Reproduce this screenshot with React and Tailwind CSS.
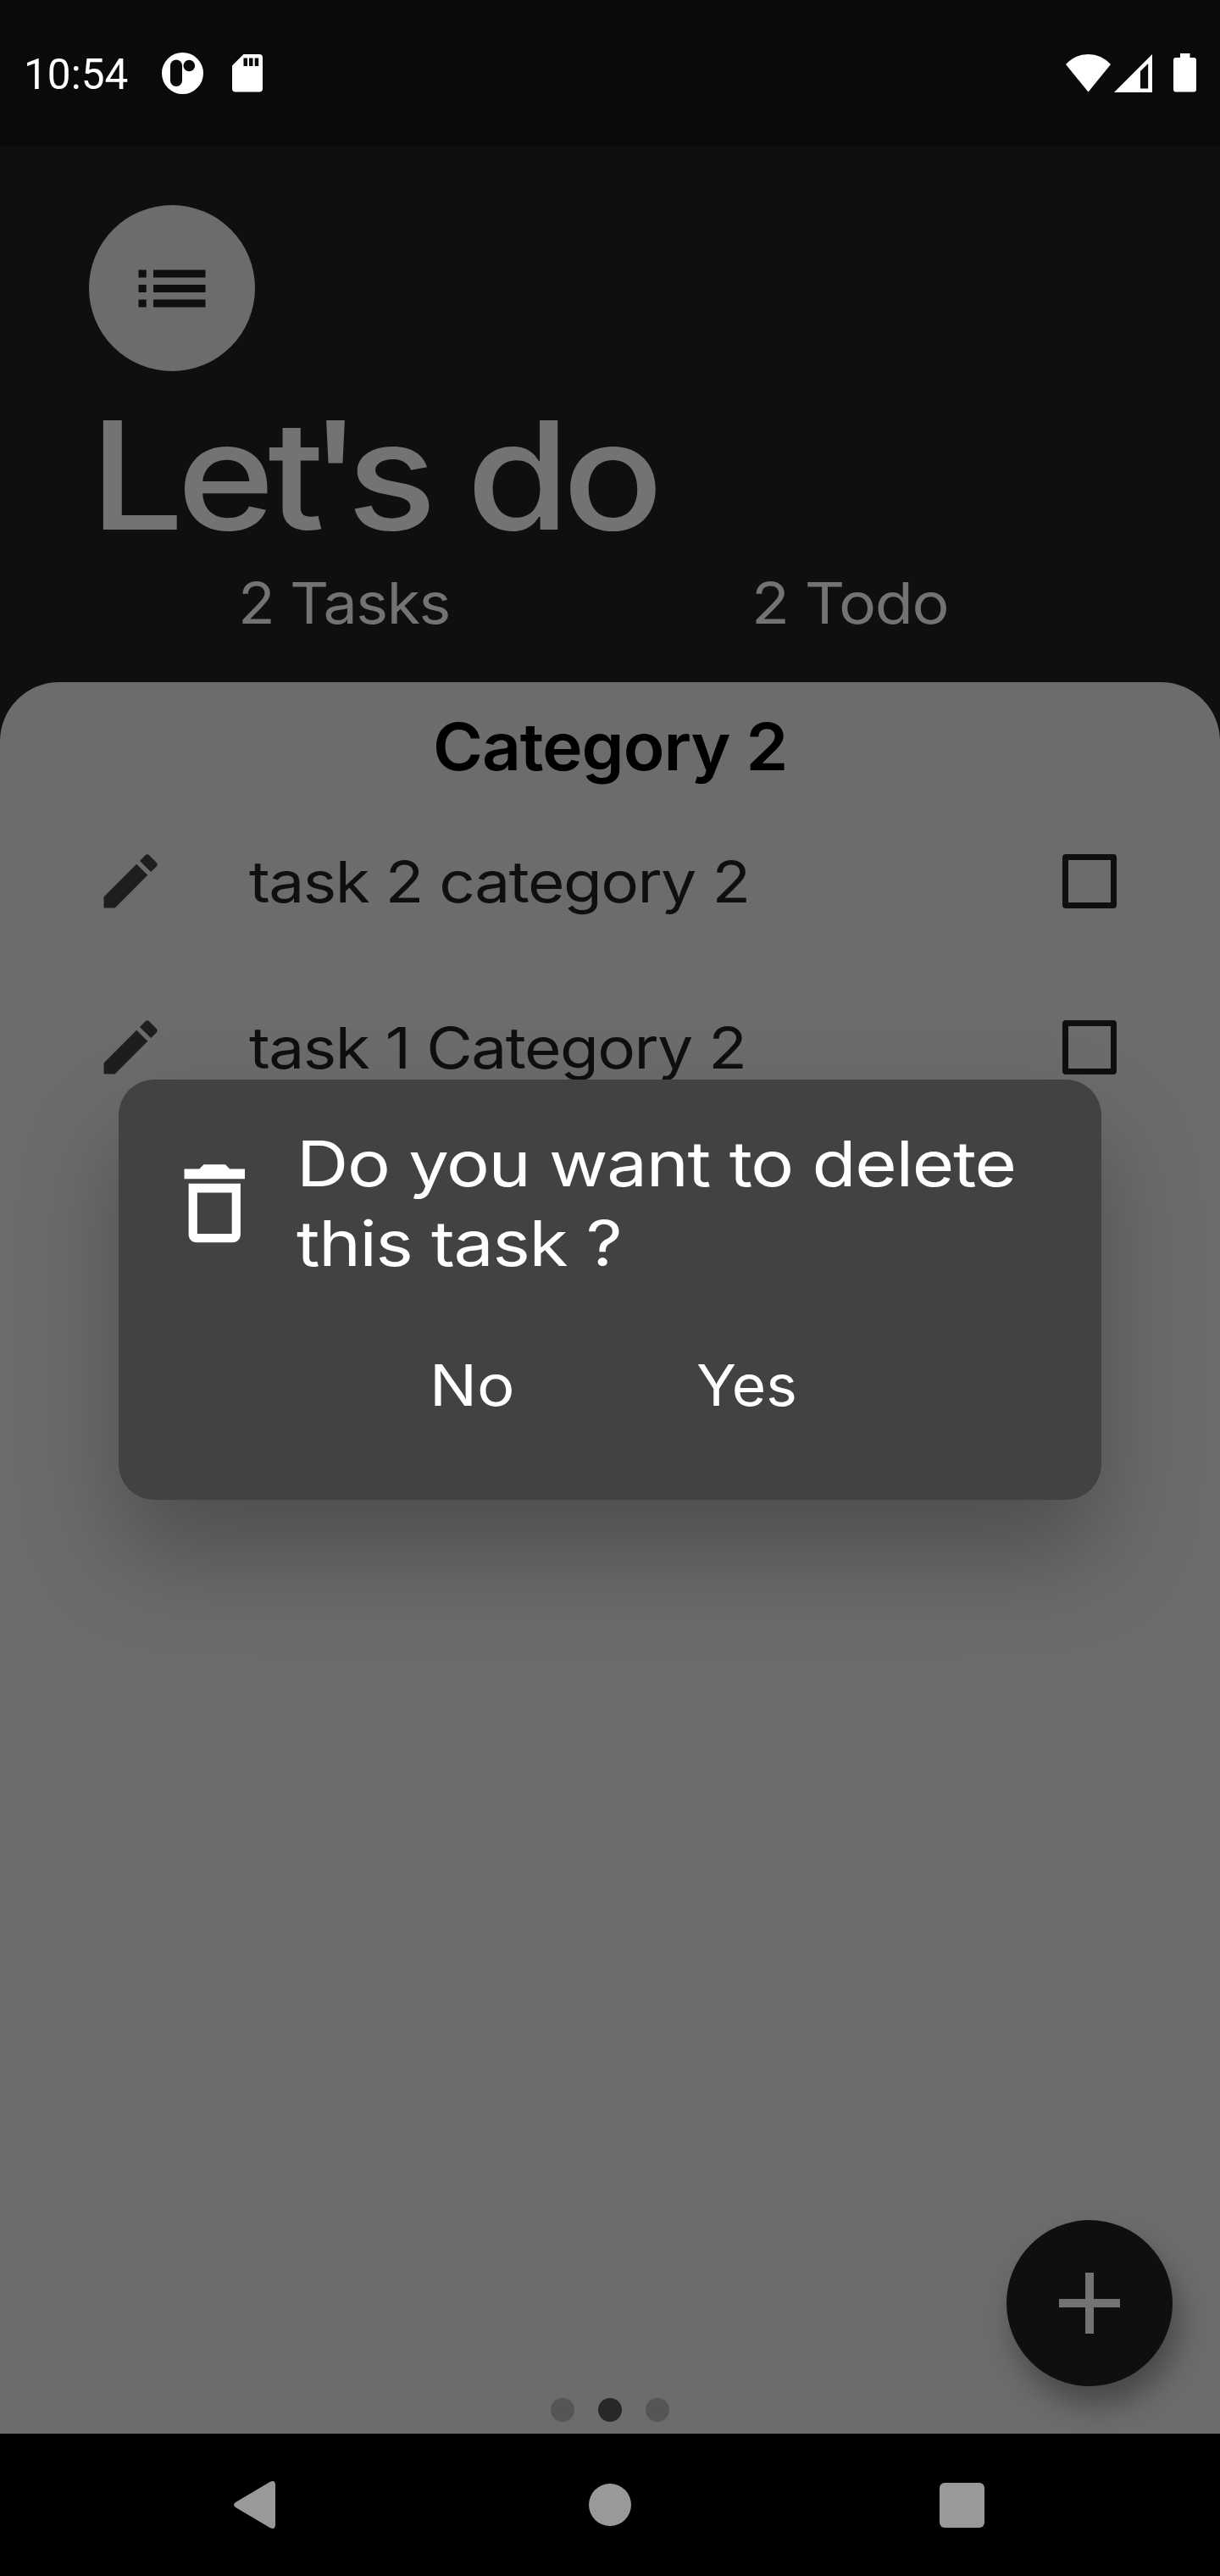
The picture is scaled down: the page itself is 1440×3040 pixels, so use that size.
import React from "react";

function StatusBar() {
  return (
    <div className="flex h-[172px] items-center bg-[#0a0a0a] pl-[28px] pr-[28px] text-white">
      <span className="mt-[3px] w-[126px] font-['Roboto',sans-serif] text-[49.5px] leading-[50px]">10:54</span>
      <svg className="ml-[37px] h-[49px] w-[49px]" viewBox="0 0 49 49">
        <circle cx="24.5" cy="24.5" r="24.5" fill="#fff" />
        <rect x="10" y="8.5" width="14" height="31.5" rx="7" fill="#0a0a0a" />
        <circle cx="32.3" cy="15.5" r="6.8" fill="#0a0a0a" />
      </svg>
      <svg className="ml-[34px] h-[45px] w-[36px]" viewBox="0 0 36 45">
        <path
          d="M13.5 0H32a4 4 0 0 1 4 4v36.500a4 4 0 0 1-4 4H4a4 4 0 0 1-4-4V13.500z"
          fill="#fff"
        />
        <path d="M13.500 4.500h4.500v9.500h-4.500zM20 4.500h4.500v9.500H20zM26.700 4.500h4.500v9.500h-4.500z" fill="#0a0a0a" />
      </svg>
      <svg className="ml-auto h-[45px] w-[53px]" viewBox="0 0 53 45">
        <path d="M0 12Q11 0 26.500 0T53 12L26.500 44.500z" fill="#fff" />
      </svg>
      <svg className="ml-[4px] h-[45px] w-[45px]" viewBox="0 0 45 45">
        <path fillRule="evenodd" d="M45 0v45H0zM40.200 11L31 20v20.500h9.200z" fill="#fff" />
      </svg>
      <svg className="ml-[25px] h-[46px] w-[27px]" viewBox="0 0 27 46">
        <path
          d="M8 0h11.500v5H24a3 3 0 0 1 3 3v34.500a3 3 0 0 1-3 3H3a3 3 0 0 1-3-3V8a3 3 0 0 1 3-3h5z"
          fill="#fff"
        />
      </svg>
    </div>
  );
}

function Header() {
  return (
    <header className="h-[633px] bg-[#0f0f0f] pt-[70px] text-[#737373]">
      <div className="ml-[105px] flex h-[196px] w-[196px] items-center justify-center rounded-full bg-[#6c6c6c]">
        <svg className="h-[45px] w-[80px]" viewBox="0 0 80 45">
          <path
            d="M0.500 0.500h9.200v9h-9.200zM0.500 18h9.200v9h-9.200zM0.500 35.500h9.200v9h-9.200zM18 .5h61.500v9H18zM18 18h61.500v9H18zM18 35.500h61.500v9H18z"
            fill="#0f0f0f"
          />
        </svg>
      </div>
      <h1 className="ml-[106px] mt-[35px] w-max origin-left scale-x-[1.112] text-[177px] font-medium leading-[177px] tracking-[-0.043em]">
        Le<span className="tracking-[-0.09em]">t'</span>s do
      </h1>
      <div className="mt-[28px] flex pl-[281px] text-[67px] leading-[67px] tracking-[-0.02em]">
        <div className="w-[606px]">
          <div className="w-max origin-left scale-x-[1.069]">2 Tasks</div>
        </div>
        <div className="w-max origin-left scale-x-[1.1]">2 Todo</div>
      </div>
    </header>
  );
}

function TaskRow({ label }) {
  return (
    <li className="flex h-[196px] items-center px-[112px]">
      <svg className="h-[84px] w-[84px] shrink-0" viewBox="0 0 24 24" fill="#1e1e1e">
        <path d="M3 17.250V21h3.750L17.810 9.940l-3.750-3.750L3 17.250zM20.710 7.040a.996.996 0 0 0 0-1.410l-2.340-2.340a.996.996 0 0 0-1.410 0l-1.830 1.830 3.750 3.750 1.830-1.830z" />
      </svg>
      <span className="ml-[97.5px] mt-px w-max origin-left scale-x-[1.115] text-[67px] leading-[67px] tracking-[-0.02em] text-[#0f0f0f]">
        {label}
      </span>
      <span className="ml-auto mr-[10px] h-[64px] w-[64px] rounded-[4px] border-[7px] border-[#0f0f0f]" />
    </li>
  );
}

function DeleteDialog() {
  return (
    <div className="absolute left-[140px] top-[1274px] h-[496px] w-[1160px] rounded-[42px] bg-[#424242] text-white shadow-[0_64px_120px_rgba(0,0,0,0.28)]">
      <div className="flex items-center pl-[52px] pt-[52px]">
        <svg className="h-[122.5px] w-[122.5px]" viewBox="0 0 24 24" fill="#fff">
          <path
            fillRule="evenodd"
            d="M6 19.200c0 1 .8 1.800 1.800 1.800h8.400c1 0 1.800-.8 1.800-1.800V7.400H6v11.800zM8 9.500h8V19H8V9.500zM15.500 4l-1-1h-5l-1 1H5v2.300h14V4z"
          />
        </svg>
        <div className="ml-[35px] text-[74px] leading-[94px] tracking-[-0.015em]">
          <div className="w-max origin-left scale-x-[1.147]">Do you want to delete</div>
          <div className="w-max origin-left scale-x-[1.134]">this task ?</div>
        </div>
      </div>
      <div className="mt-[87px] flex pl-[366.5px] text-[67px] leading-[67px]">
        <div className="w-[315.5px]">
          <div className="w-max origin-left scale-x-[1.11]">No</div>
        </div>
        <div className="w-max origin-left scale-x-[1.035]">Yes</div>
      </div>
    </div>
  );
}

export default function App() {
  return (
    <div className="relative flex h-[3040px] w-[1440px] flex-col overflow-hidden bg-[#0f0f0f] font-['Inter',sans-serif]">
      <StatusBar />
      <Header />
      <main className="relative flex h-[2067px] flex-col rounded-t-[70px] bg-[#6c6c6c]">
        <div className="flex h-[137px] justify-center pt-[38px]">
          <h2 className="h-[77px] scale-x-[1.04] text-[77px] font-semibold leading-[77px] tracking-[-0.013em] text-black">
            Category 2
          </h2>
        </div>
        <ul>
          <TaskRow label="task 2 category 2" />
          <TaskRow label="task 1 Category 2" />
        </ul>
        <div className="mt-auto flex justify-center gap-[28px] pb-[14px]">
          <span className="h-[28px] w-[28px] rounded-full bg-[#555555]" />
          <span className="h-[28px] w-[28px] rounded-full bg-[#282828]" />
          <span className="h-[28px] w-[28px] rounded-full bg-[#555555]" />
        </div>
        <button className="absolute bottom-[56px] right-[56px] flex h-[196px] w-[196px] items-center justify-center rounded-full bg-[#0f0f0f] shadow-[8px_22px_34px_rgba(0,0,0,0.34)]">
          <svg className="h-[72px] w-[72px]" viewBox="0 0 72 72">
            <path d="M31 0h10v31h31v10H41v31H31V41H0V31h31z" fill="#737373" />
          </svg>
        </button>
      </main>
      <nav className="relative flex h-[168px] items-center bg-black pl-[276px] pr-[278.5px]">
        <svg className="h-[56px] w-[49px]" viewBox="0 0 49 56">
          <path d="M43 .7q6-2.500 6 4v46.600q0 6.500-6 4L2 31q-4-3 0-6z" fill="#999" />
        </svg>
        <span className="ml-[370px] h-[50px] w-[50px] rounded-full bg-[#999999]" />
        <span className="ml-auto h-[53px] w-[53px] rounded-[6px] bg-[#999999]" />
      </nav>
      <DeleteDialog />
    </div>
  );
}
